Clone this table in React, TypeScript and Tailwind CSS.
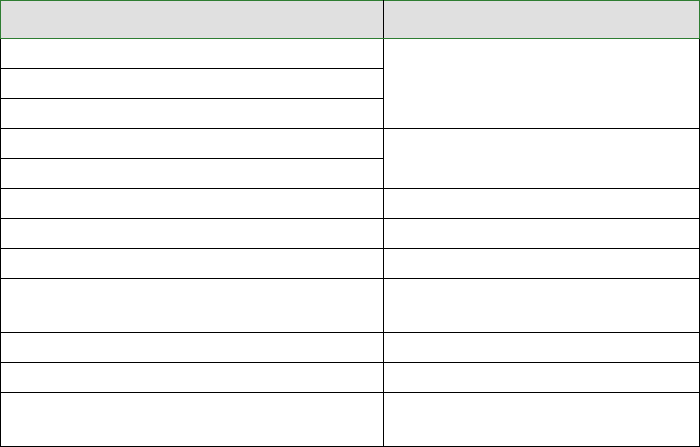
import React from "react";

export default function App() {
  const td = "border border-black p-0";
  const rows: { h: string; right?: { span: number } | null }[] = [
    { h: "h-[30px]", right: { span: 3 } },
    { h: "h-[30px]", right: null },
    { h: "h-[30px]", right: null },
    { h: "h-[30px]", right: { span: 2 } },
    { h: "h-[30px]", right: null },
    { h: "h-[30px]", right: { span: 1 } },
    { h: "h-[30px]", right: { span: 1 } },
    { h: "h-[30px]", right: { span: 1 } },
    { h: "h-[54px]", right: { span: 1 } },
    { h: "h-[30px]", right: { span: 1 } },
    { h: "h-[30px]", right: { span: 1 } },
    { h: "h-[54px]", right: { span: 1 } },
  ];
  return (
    <div className="w-[700px] h-[447px] bg-white font-['Liberation_Sans',sans-serif] text-sm">
      <table className="w-[700px] table-fixed border-collapse">
        <colgroup>
          <col className="w-[383px]" />
          <col />
        </colgroup>
        <thead>
          <tr className="h-[38px] bg-[#e0e0e0]">
            <th className="border border-[#2e7d32] border-r-black p-0"></th>
            <th className="border border-[#2e7d32] border-l-black p-0"></th>
          </tr>
        </thead>
        <tbody>
          {rows.map((r, i) => (
            <tr key={i} className={r.h}>
              <td className={td}></td>
              {r.right ? <td className={td} rowSpan={r.right.span}></td> : null}
            </tr>
          ))}
        </tbody>
      </table>
    </div>
  );
}
